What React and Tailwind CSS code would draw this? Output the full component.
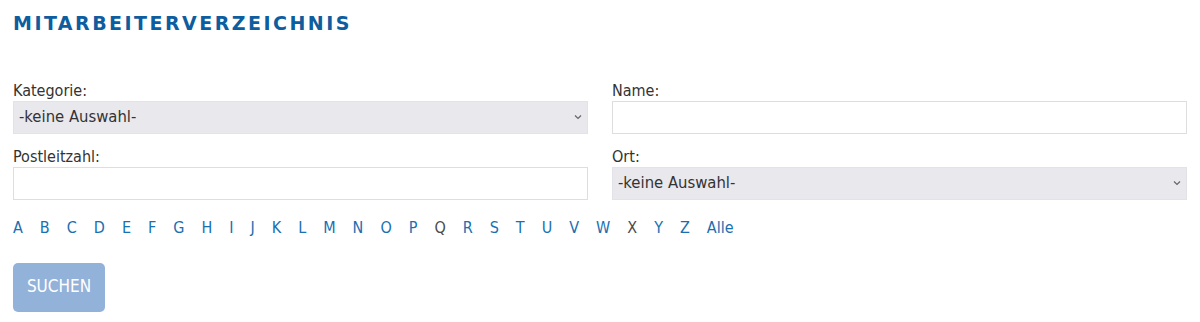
import { useState } from "react";

const LETTERS = "ABCDEFGHIJKLMNOPQRSTUVWXYZ".split("");
const EMPTY = ["Q", "X"];

const Chevron = () => (
  <svg
    width="8"
    height="5"
    viewBox="0 0 8 5"
    className="pointer-events-none absolute right-[6px] top-1/2 -translate-y-1/2"
  >
    <path d="M1 1l3 3 3-3" fill="none" stroke="#666" strokeWidth="1.2" />
  </svg>
);

const SelectField = ({ label }) => (
  <label className="block">
    <span className="block h-[21px] leading-[21px] text-[#333]">{label}</span>
    <div className="relative">
      <select className="block h-[33px] w-full appearance-none border border-[#e3e2e7] bg-[#e9e8ed] pl-[5px] text-[16.5px] text-[#333] outline-none">
        <option>-keine Auswahl-</option>
      </select>
      <Chevron />
    </div>
  </label>
);

const TextField = ({ label }) => (
  <label className="block">
    <span className="block h-[21px] leading-[21px] text-[#333]">{label}</span>
    <input
      type="text"
      className="block h-[33px] w-full border border-[#dedede] bg-white px-[5px] text-[16px] text-[#333] outline-none"
    />
  </label>
);

const App = () => {
  const [letter, setLetter] = useState(null);

  return (
    <div
      className="min-h-[322px] bg-white px-[13px] pt-[9px] text-[16px]"
      style={{ fontFamily: '"DejaVu Sans Condensed", "DejaVu Sans", sans-serif' }}
    >
      <h1
        className="text-[19px] font-bold uppercase tracking-[0.13em] text-[#0d5d9f]"
        style={{ fontFamily: '"DejaVu Sans", Verdana, sans-serif' }}
      >
        Mitarbeiterverzeichnis
      </h1>

      <form className="mt-[42px]" onSubmit={(e) => e.preventDefault()}>
        <div className="grid grid-cols-2 gap-x-6 gap-y-[12px]">
          <SelectField label="Kategorie:" />
          <TextField label="Name:" />
          <TextField label="Postleitzahl:" />
          <SelectField label="Ort:" />
        </div>

        <div className="mt-[18px] flex gap-[17px] leading-[20px]">
          {LETTERS.map((l) => (
            <a
              key={l}
              href="#"
              onClick={(e) => {
                e.preventDefault();
                setLetter(l);
              }}
              className={
                EMPTY.includes(l)
                  ? "text-[#4b4b4b]"
                  : letter === l
                    ? "text-[#0d5d9f] underline"
                    : "text-[#1a6fb1]"
              }
            >
              {l}
            </a>
          ))}
          <a href="#" className="text-[#1a6fb1]" onClick={(e) => e.preventDefault()}>
            Alle
          </a>
        </div>

        <button
          type="submit"
          className="mt-[25px] h-[49px] w-[92px] rounded-[5px] bg-[#93b2d9] text-[17px] text-white"
        >
          SUCHEN
        </button>
      </form>
    </div>
  );
};

export default App;
